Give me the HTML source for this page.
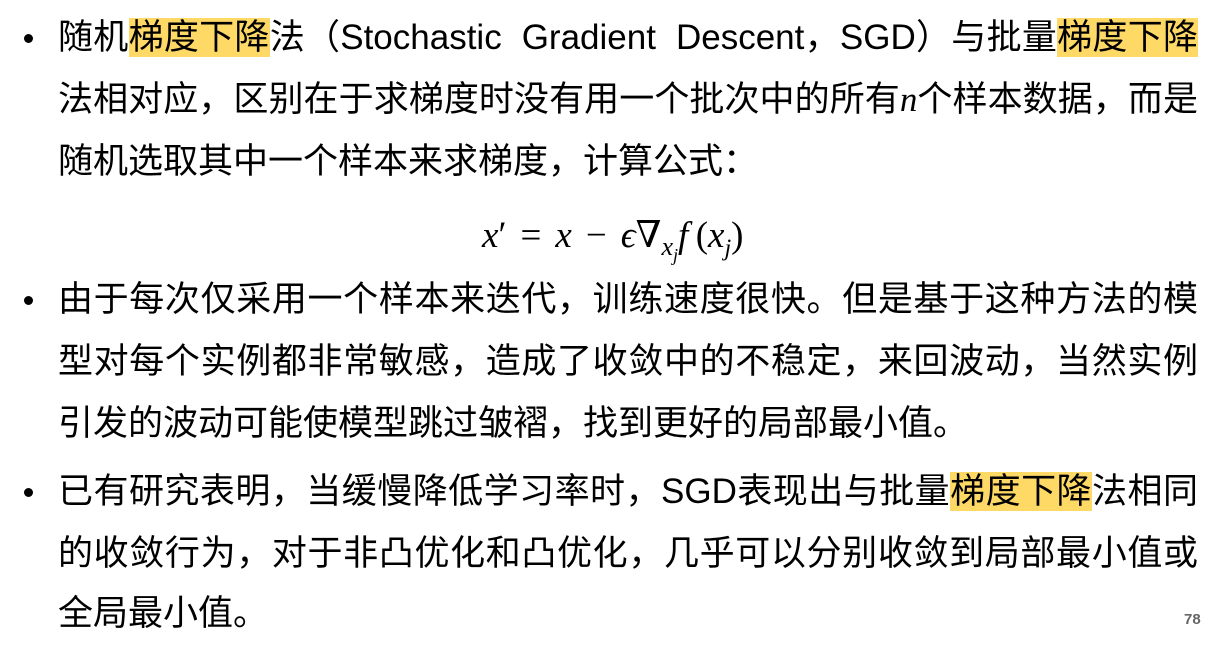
<!DOCTYPE html>
<html><head><meta charset="utf-8"><style>
body{margin:0;width:1230px;height:649px;background:#fff;position:relative;overflow:hidden;font-family:"Liberation Sans","Noto Sans CJK SC",sans-serif;color:#000}
.l{position:absolute;left:58px;width:1140px;height:62px;line-height:62px;font-size:35px;white-space:nowrap}
.j{text-align:justify;text-align-last:justify}
.h{background:#FFD966}
.b{position:absolute;left:24px;width:9px;height:9px;border-radius:50%;background:#000}
.m{font-family:"Liberation Serif","DejaVu Serif",serif;font-style:italic}
.f{position:absolute;left:482px;top:206px;font-size:37px;line-height:60px;font-family:"Liberation Serif","DejaVu Serif",serif;white-space:nowrap}
.f .s{display:inline-block;width:14px}
.pn{position:absolute;left:1184px;top:611px;font-size:15px;font-weight:bold;color:#666}
</style></head><body>
<div class="b" style="top:34px"></div>
<div class="l j" style="top:7px">随机<span class="h">梯度下降</span>法（Stochastic&nbsp; Gradient&nbsp; Descent，SGD）与批量<span class="h">梯度下降</span></div>
<div class="l j" style="top:69px">法相对应，区别在于求梯度时没有用一个批次中的所有<span class="m">n</span>个样本数据，而是</div>
<div class="l" style="top:131px">随机选取其中一个样本来求梯度，计算公式：</div>
<div class="f"><i>x</i>′<span class="s"></span>=<span class="s"></span><i>x</i><span class="s"></span>−<span class="s"></span><i>ϵ</i>∇<sub style="font-size:26px"><i>x<sub style="font-size:18px">j</sub></i></sub><i>f</i>&thinsp;(<i>x<sub style="font-size:24px">j</sub></i>)</div>
<div class="b" style="top:296px"></div>
<div class="l j" style="top:269px">由于每次仅采用一个样本来迭代，训练速度很快。但是基于这种方法的模</div>
<div class="l j" style="top:331px">型对每个实例都非常敏感，造成了收敛中的不稳定，来回波动，当然实例</div>
<div class="l" style="top:393px">引发的波动可能使模型跳过皱褶，找到更好的局部最小值。</div>
<div class="b" style="top:488px"></div>
<div class="l j" style="top:461px">已有研究表明，当缓慢降低学习率时，SGD表现出与批量<span class="h">梯度下降</span>法相同</div>
<div class="l j" style="top:523px">的收敛行为，对于非凸优化和凸优化，几乎可以分别收敛到局部最小值或</div>
<div class="l" style="top:583px">全局最小值。</div>
<div class="pn">78</div>
</body></html>
